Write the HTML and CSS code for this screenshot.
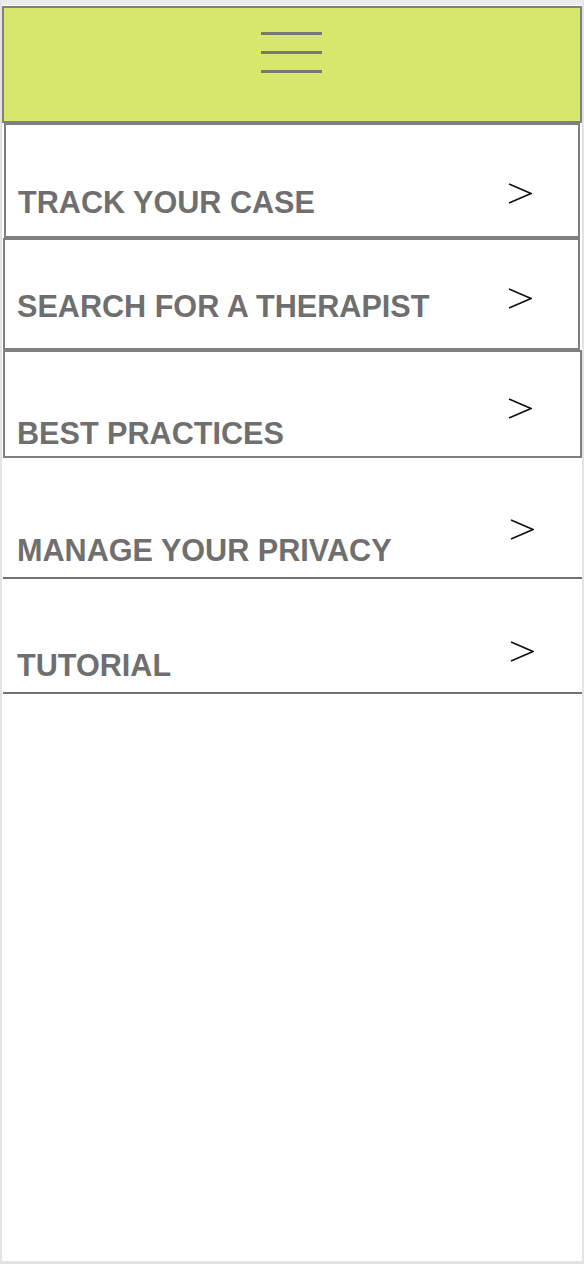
FILE: index.html
```html
<!DOCTYPE html>
<html>
<head>
<meta charset="utf-8">
<link rel="stylesheet" href="styles.css">
</head>
<body>
<div class="frame">
  <header class="topbar">
    <div class="burger"><span></span><span></span><span></span></div>
  </header>
  <nav class="menu">
    <a class="item item-1 boxed"><span class="label">TRACK YOUR CASE</span><svg class="chev" viewBox="0 0 24 21"><polyline points="1,1 23,10.5 1,20"/></svg></a>
    <a class="item item-2 boxed"><span class="label">SEARCH FOR A THERAPIST</span><svg class="chev" viewBox="0 0 24 21"><polyline points="1,1 23,10.5 1,20"/></svg></a>
    <a class="item item-3 boxed open"><span class="label">BEST PRACTICES</span><svg class="chev" viewBox="0 0 24 21"><polyline points="1,1 23,10.5 1,20"/></svg></a>
    <a class="item item-4 line"><span class="label">MANAGE YOUR PRIVACY</span><svg class="chev" viewBox="0 0 24 21"><polyline points="1,1 23,10.5 1,20"/></svg></a>
    <a class="item item-5 line"><span class="label">TUTORIAL</span><svg class="chev" viewBox="0 0 24 21"><polyline points="1,1 23,10.5 1,20"/></svg></a>
  </nav>
</div>
</body>
</html>
```

FILE: styles.css
```css
html, body {
  margin: 0;
  padding: 0;
  background: #ffffff;
}
.frame {
  box-sizing: border-box;
  width: 584px;
  height: 1264px;
  border-left: 2px solid #e3e3e3;
  border-right: 2px solid #e3e3e3;
  border-bottom: 3px solid #e3e3e3;
  border-top: 5px solid #ececec;
  background: #ffffff;
  font-family: "Liberation Sans", Arial, sans-serif;
}
.topbar {
  box-sizing: border-box;
  margin-top: 1px;
  width: 580px;
  height: 117px;
  background: #d7e66c;
  border: 2px solid #7f7f7f;
  display: flex;
  justify-content: center;
}
.burger {
  display: flex;
  flex-direction: column;
  gap: 16px;
  padding-top: 24px;
  padding-right: 2px;
}
.burger span {
  display: block;
  width: 61px;
  height: 3px;
  background: #777777;
}
.menu {
  display: flex;
  flex-direction: column;
}
.item {
  box-sizing: border-box;
  display: flex;
  justify-content: space-between;
  align-items: flex-start;
  color: #6f6f6f;
  text-decoration: none;
  padding-left: 12px;
  padding-right: 46px;
}
.label {
  font-weight: bold;
  font-size: 30.6px;
  line-height: 30px;
}
.chev {
  width: 24px;
  height: 21px;
  flex: none;
}
.chev polyline {
  fill: none;
  stroke: #111111;
  stroke-width: 1.6;
}
.boxed {
  border: 2px solid #7f7f7f;
}
.line {
  border-bottom: 2px solid #727272;
  padding-left: 14px;
  padding-right: 48px;
}
.item-1 {
  margin-left: 2px;
  width: 576px;
  height: 115px;
}
.item-1 .label { margin-top: 62px; }
.item-1 .chev { margin-top: 58px; }
.item-2 {
  margin-left: 1px;
  width: 577px;
  height: 112px;
}
.item-2 .label { margin-top: 51px; }
.item-2 .chev { margin-top: 48px; }
.item-3 {
  margin-left: 1px;
  width: 579px;
  height: 108px;
  padding-right: 48px;
}
.item-3 .label { margin-top: 66px; }
.item-3 .chev { margin-top: 46px; }
.item-4 {
  margin-left: 1px;
  width: 579px;
  height: 121px;
}
.item-4 .label { margin-top: 77px; }
.item-4 .chev { margin-top: 61px; }
.item-5 {
  margin-left: 1px;
  width: 579px;
  height: 115px;
}
.item-5 .label { margin-top: 71px; }
.item-5 .chev { margin-top: 62px; }
```
